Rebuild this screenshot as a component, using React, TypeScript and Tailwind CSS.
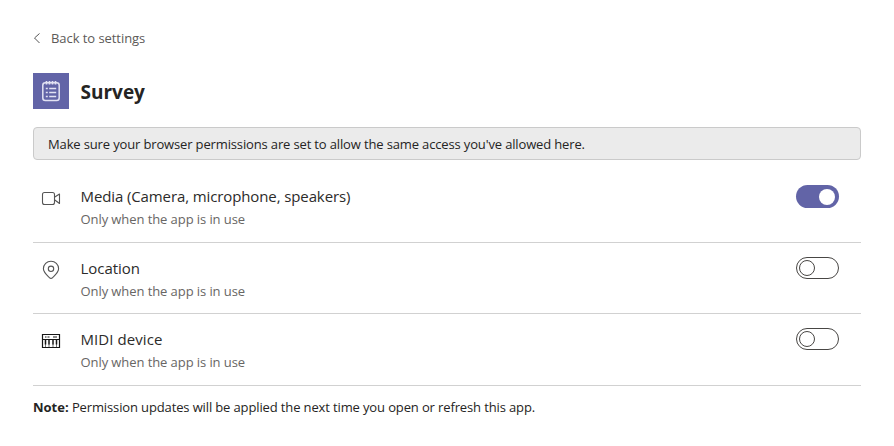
import type { ReactNode } from "react";

function SurveyIcon() {
  return (
    <svg width="36" height="36" viewBox="0 0 36 36" fill="none" stroke="#e2e2f3" strokeWidth="1.5">
      <rect x="9.800" y="9.800" width="16.400" height="17.600" rx="2.500" />
      <path d="M13.500 8v3.500M16.500 8v3.500M19.500 8v3.500M22.500 8v3.500" strokeWidth="1.700" />
      <path d="M12.800 15.500h2M12.800 19.500h2M12.800 23.500h2M16.200 15.500h7M16.200 19.500h7M16.200 23.500h7" strokeWidth="1.300" />
    </svg>
  );
}

function CameraIcon() {
  return (
    <svg width="20" height="20" viewBox="0 0 20 20" fill="none" stroke="#555" strokeWidth="1.1">
      <rect x="1.500" y="4.500" width="12" height="12" rx="2" />
      <path d="M13.800 9 18.500 6v9.500L13.800 12" strokeLinejoin="round" />
    </svg>
  );
}

function PinIcon() {
  return (
    <svg width="20" height="20" viewBox="0 0 20 20" fill="none" stroke="#555" strokeWidth="1.1">
      <path d="M10 18.400c-.5 0-1-.2-1.400-.6C5.600 14.900 2.400 12.300 2.400 8.800a7.600 7.600 0 0 1 15.200 0c0 3.500-3.200 6.100-6.200 9-.4.400-.9.600-1.400.6Z" />
      <circle cx="10" cy="8.800" r="2.700" />
    </svg>
  );
}

function MidiIcon() {
  return (
    <svg width="20" height="20" viewBox="0 0 20 20" fill="none" stroke="#161616" strokeWidth="1.2">
      <path d="M1.500 3.500h17v13h-17zM1.500 8.500h17" />
      <path d="M4 6h1.500M6.500 6h2M12 6h4" strokeWidth="1" />
      <path d="M4.500 9v4.500M8 9v4.500M12 9v4.500M15.500 9v4.500" strokeWidth="1.500" />
      <path d="M4.500 13v3M8 13v3M12 13v3M15.500 13v3" strokeWidth=".6" />
    </svg>
  );
}

function Toggle({ on = false }: { on?: boolean }) {
  return on ? (
    <button role="switch" aria-checked="true" className="flex h-[23px] w-[43px] items-center justify-end rounded-full bg-[#6264a7] pr-[4px]">
      <span className="size-[16px] rounded-full bg-white" />
    </button>
  ) : (
    <button role="switch" aria-checked="false" className="flex h-[22px] w-[43px] items-center rounded-full border border-[#484644] pl-[2px]">
      <span className="size-[16px] rounded-full border border-[#484644]" />
    </button>
  );
}

function Row({ icon, title, className, on }: { icon: ReactNode; title: ReactNode; className: string; on?: boolean }) {
  return (
    <div className={`flex items-start border-b border-[#d1d1d1] ${className}`}>
      <div className="ml-[8px] mt-[3px] w-[39.500px]">{icon}</div>
      <div className="flex-1">
        <div className="text-[15px] leading-[23px] text-[#2c2b2a]">{title}</div>
        <div className="mt-px text-[13px] leading-[21px] tracking-[-0.08px] text-[#686664]">Only when the app is in use</div>
      </div>
      <div className="mr-[22px]">
        <Toggle on={on} />
      </div>
    </div>
  );
}

export default function App() {
  return (
    <main className="h-[446px] bg-white px-[33px] pt-[28px] font-['Open_Sans',sans-serif] text-[#252423]">
      <button className="flex h-[20px] items-center text-[13px] leading-[20px] tracking-[-0.06px] text-[#5c5a58]">
        <svg className="mr-[10px]" width="8" height="12" viewBox="0 0 8 12" fill="none" stroke="#555">
          <path d="M6.500 1.500 1.500 6l5 5" />
        </svg>
        <span>Back to settings</span>
      </button>
      <header className="mt-[25px] flex items-center">
        <div className="size-[36px] bg-[#6264a7]"><SurveyIcon /></div>
        <h1 className="ml-[11.500px] pt-[2px] text-[19px] leading-[28px] font-bold">Survey</h1>
      </header>
      <div className="mt-[18px] flex h-[33px] items-center rounded-[4px] border border-[#cacaca] bg-[#ebebeb] px-[14px] pt-[2px] text-[13px] tracking-[-0.144px]">
        <span>Make sure your browser permissions are set to allow the same access you've allowed here.</span>
      </div>
      <section className="mt-[11px]">
        <Row className="h-[72px] pt-[14px] tracking-[-0.11px]" icon={<CameraIcon />} title="Media (Camera, microphone, speakers)" on />
        <Row className="h-[71px] pt-[14px] tracking-[-0.05px]" icon={<PinIcon />} title="Location" />
        <Row className="h-[72px] pt-[14px] tracking-[0.07px]" icon={<MidiIcon />} title="MIDI device" />
      </section>
      <p className="mt-[11px] text-[13px] leading-[20px] tracking-[-0.13px]"><b className="tracking-normal">Note:</b> <span>Permission updates will be applied the next time you open or refresh this app.</span></p>
    </main>
  );
}
